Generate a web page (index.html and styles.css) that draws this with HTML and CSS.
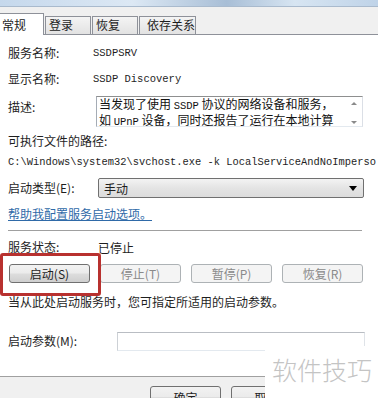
FILE: index.html
```html
<!DOCTYPE html>
<html lang="zh-CN">
<head>
    <meta charset="UTF-8">
    <meta name="viewport" content="width=device-width, initial-scale=1.0">
    <title>SSDP Discovery 的属性</title>
    <link rel="stylesheet" href="styles.css">
</head>
<body>
    <!-- 窗口边框 -->
    <div class="frame"></div>

    <!-- 选项卡 -->
    <div class="tabs">
        <div class="tab active">常规</div>
        <div class="tab">登录</div>
        <div class="tab">恢复</div>
        <div class="tab wide">依存关系</div>
    </div>

    <div class="panel">
        <div class="row first">
            <span class="label">服务名称:</span>
            <span class="value mono">SSDPSRV</span>
        </div>
        <div class="row">
            <span class="label">显示名称:</span>
            <span class="value mono">SSDP Discovery</span>
        </div>
        <div class="row desc">
            <span class="label">描述:</span>
            <div class="textarea">
                <div class="textarea-text">当发现了使用 <span class="mono">SSDP</span> 协议的网络设备和服务，<br>如 <span class="mono">UPnP</span> 设备，同时还报告了运行在本地计算</div>
                <div class="scroll">
                    <span class="arrow up"></span>
                    <span class="arrow down"></span>
                </div>
            </div>
        </div>

        <div class="path-label">可执行文件的路径:</div>
        <div class="path mono">C:\Windows\system32\svchost.exe -k LocalServiceAndNoImperso</div>

        <div class="row type">
            <span class="label wide">启动类型(E):</span>
            <div class="select">
                <span>手动</span>
                <span class="caret"></span>
            </div>
        </div>

        <a class="help" href="#">帮助我配置服务启动选项。</a>

        <div class="sep"></div>

        <div class="row status">
            <span class="label wide">服务状态:</span>
            <span class="value">已停止</span>
        </div>

        <div class="buttons">
            <button class="btn">启动(S)</button>
            <button class="btn" disabled>停止(T)</button>
            <button class="btn" disabled>暂停(P)</button>
            <button class="btn" disabled>恢复(R)</button>
        </div>

        <p class="hint">当从此处启动服务时，您可指定所适用的启动参数。</p>

        <div class="row params">
            <span class="label param">启动参数(M):</span>
            <div class="input"></div>
        </div>
    </div>

    <div class="footer">
        <button class="btn">确定</button>
        <button class="btn">取消</button>
    </div>

    <!-- 红框标注 和 水印 -->
    <div class="highlight"></div>
    <div class="watermark">软件技巧</div>
</body>
</html>
```

FILE: styles.css
```css
body {
    margin: 0;
    width: 378px;
    height: 398px;
    overflow: hidden;
    position: relative;
    background: #fff;
    font-family: "Noto Sans CJK SC", "Noto Sans", sans-serif;
    font-size: 12px;
    color: #1e1e1e;
}
.mono {
    font-family: "Liberation Mono", "Noto Sans CJK SC", monospace;
}
.frame {
    height: 7px;
    background: linear-gradient(to right, #c5d8ec, #dce8f4 35%, #a8bed6 60%, #d7e5f2 78%, #bfd3e8);
    border-bottom: 1px solid #a9bacd;
    box-sizing: border-box;
}
.tabs {
    height: 27px;
    background: #f0f0f0;
    border-bottom: 1px solid #8e9199;
    display: flex;
    align-items: flex-end;
    gap: 1px;
}
.tab {
    width: 46px;
    height: 18px;
    box-sizing: border-box;
    padding-left: 3px;
    line-height: 16px;
    border: 1px solid #8e9199;
    border-bottom: none;
    background: linear-gradient(#f4f4f4, #e2e2e2);
}
.tab.active {
    width: 44px;
    height: 22px;
    margin-bottom: -1px;
    padding-left: 2px;
    line-height: 21px;
    border-left: none;
    background: #fff;
}
.tab.wide {
    width: 57px;
    padding-left: 7px;
}
.panel {
    padding: 8px 0 25px 8px;
    border-bottom: 1px solid #a0a0a0;
}
.row {
    display: flex;
    align-items: center;
    margin-top: 6px;
    height: 20px;
}
.row.first {
    margin-top: 0;
}
.label {
    width: 85px;
    flex-shrink: 0;
    line-height: 20px;
}
.label.wide {
    width: 90px;
}
.label.param {
    width: 109px;
}
.value.mono {
    font-size: 10.5px;
}
.row.desc {
    margin-top: 7px;
    height: 31px;
    align-items: flex-start;
}
.row.desc .label {
    width: 88px;
    line-height: 21px;
}
.textarea {
    width: 267px;
    height: 31px;
    box-sizing: border-box;
    border: 1px solid;
    border-color: #8e8f8f #dbdfe6 #e3e9ef #a5acb5;
    display: flex;
}
.textarea-text {
    flex: 1;
    padding-left: 2px;
    line-height: 14px;
    white-space: nowrap;
    color: #111;
}
.textarea-text .mono {
    font-size: 10.5px;
}
.scroll {
    width: 17px;
    display: flex;
    flex-direction: column;
    justify-content: space-between;
    align-items: center;
    padding: 5px 0 2px;
}
.arrow {
    width: 0;
    height: 0;
    border-left: 3px solid transparent;
    border-right: 3px solid transparent;
}
.arrow.up {
    border-bottom: 3px solid #8a8a8a;
}
.arrow.down {
    border-top: 3px solid #8a8a8a;
}
.path-label {
    margin-top: 6px;
    line-height: 16px;
}
.path {
    margin-top: 6px;
    line-height: 14px;
    font-size: 10.4px;
    white-space: nowrap;
}
.row.type {
    margin-top: 9px;
}
.select {
    width: 266px;
    height: 20px;
    box-sizing: border-box;
    border: 1px solid #707070;
    border-radius: 2px;
    background: linear-gradient(#f3f3f3, #e4e4e4 50%, #dcdcdc);
    display: flex;
    align-items: center;
    justify-content: space-between;
    padding: 0 6px 0 5px;
}
.caret {
    width: 0;
    height: 0;
    border-left: 4px solid transparent;
    border-right: 4px solid transparent;
    border-top: 5px solid #000;
}
.help {
    display: inline-block;
    margin-top: 8px;
    line-height: 16px;
    color: #2f6aa8;
    text-decoration: underline;
}
.sep {
    margin: 8px 16px 0 0;
    height: 1px;
    background: #a0a0a0;
}
.row.status {
    margin-top: 7px;
    height: 18px;
}
.buttons {
    margin-top: 8px;
    width: 354px;
    padding-left: 1px;
    display: flex;
    justify-content: space-between;
}
.btn {
    width: 81px;
    height: 19px;
    padding: 0;
    font-family: inherit;
    font-size: 12px;
    line-height: 17px;
    color: #1e1e1e;
    border: 1px solid #707070;
    border-radius: 3px;
    background: linear-gradient(#f2f2f2, #ebebeb 48%, #dddddd 52%, #cfcfcf);
}
.btn:disabled {
    color: #8a8a8a;
    border-color: #adb2b5;
    background: #f4f4f4;
}
.hint {
    margin: 11px 0 0;
    line-height: 16px;
}
.row.params {
    margin-top: 21px;
}
.input {
    width: 248px;
    height: 19px;
    box-sizing: border-box;
    border: 1px solid;
    border-color: #b9bdc3 #dfe3e8 #e3e9ef #cdd1d6;
}
.footer {
    background: #f0f0f0;
    padding: 9px 0 0 150px;
    display: flex;
    gap: 10px;
}
.footer .btn {
    width: 71px;
    height: 22px;
    flex-shrink: 0;
}
.highlight {
    position: absolute;
    left: 0;
    top: 253px;
    width: 101px;
    height: 43px;
    box-sizing: border-box;
    border: 3px solid #b8312f;
    border-radius: 3px;
}
.watermark {
    position: absolute;
    left: 265px;
    top: 346px;
    right: 0;
    bottom: 0;
    background: #fff;
    padding: 8px 0 0 7px;
    font-size: 25px;
    line-height: 30px;
    font-weight: 300;
    color: #c4c4c4;
    white-space: nowrap;
}
```
